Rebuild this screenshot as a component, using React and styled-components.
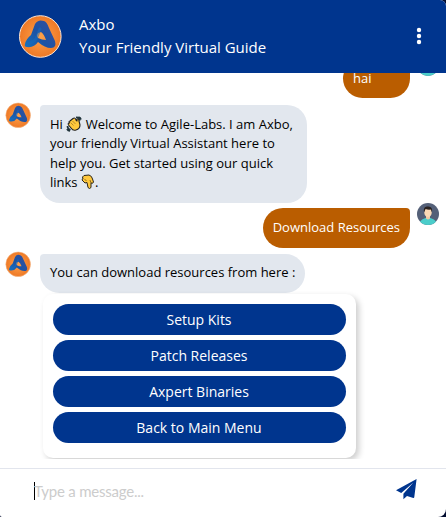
import React from "react";
import styled, { createGlobalStyle } from "styled-components";

const GlobalStyle = createGlobalStyle`
  * { box-sizing: border-box; }
  body { margin: 0; background: #020c30; overflow: hidden; }
`;

const Widget = styled.main`
  display: flex;
  flex-direction: column;
  width: 446px;
  height: 517px;
  overflow: hidden;
  background: #fff;
  border-radius: 0 6px 8px 2px;
  font-family: "Open Sans", sans-serif;
`;

const Header = styled.header`
  display: flex;
  flex: none;
  align-items: center;
  height: 73px;
  padding: 0 21px 1px 18px;
  background: #00358e;
  color: #fff;
`;

const Titles = styled.div`
  flex: 1;
  margin-left: 17px;
  padding-bottom: 1px;
  font-size: 15px;
  line-height: 23px;
`;

const MenuButton = styled.button`
  display: block;
  width: 12px;
  height: 18px;
  padding: 0;
  border: 0;
  background: none;
  color: #fff;
  svg { display: block; }
`;

const Messages = styled.section`
  display: flex;
  flex: none;
  flex-direction: column;
  justify-content: flex-end;
  height: 386px;
  overflow: hidden;
`;

const Row = styled.div`
  display: flex;
  flex: none;
  align-items: flex-start;
  justify-content: ${(p) => (p.$user ? "flex-end" : "flex-start")};
  gap: ${(p) => (p.$user ? "7px" : "9px")};
  padding: ${(p) => (p.$user ? "0 7px 0 0" : "0 0 0 5px")};
  margin-bottom: ${(p) => p.$after}px;
`;

const Bubble = styled.p`
  min-width: 67px;
  max-width: 267px;
  margin: ${(p) => (p.$user ? "5px" : "3px")} 0 0;
  padding: ${(p) => (p.$user ? "10px" : "9.6px 10px 10.4px")};
  border-radius: ${(p) => (p.$user ? "20px 4px 20px 20px" : "4px 20px 20px 20px")};
  background: ${(p) => (p.$user ? "#ba5d00" : "#e2e7ee")};
  color: ${(p) => (p.$user ? "#fff" : "#000")};
  font-size: 13px;
  line-height: 19.5px;
`;

const Options = styled.nav`
  display: flex;
  flex: none;
  flex-direction: column;
  gap: 5px;
  width: 313px;
  height: 164px;
  margin: 0 0 1px 43px;
  padding: 10px;
  border-radius: 10px;
  box-shadow: 3px 3px 6px rgba(0, 0, 0, 0.2);
`;

const Option = styled.button`
  height: 31px;
  padding: 0 1px 0 0;
  border: 0;
  border-radius: 16px;
  background: #00358e;
  color: #fff;
  font: 14px/31px "Open Sans", sans-serif;
`;

const Composer = styled.footer`
  display: flex;
  flex: 1;
  align-items: flex-start;
  justify-content: space-between;
  margin-top: 9px;
  padding: 10px 29px 0 34px;
  border-top: 1px solid #e2e5ed;
`;

const Placeholder = styled.div`
  display: flex;
  align-items: center;
  height: 24px;
  color: #ccc;
  font: 15px/20px Lato, sans-serif;
  letter-spacing: -0.22px;
`;

const Caret = styled.i`
  width: 1px;
  height: 18px;
  margin-right: -1px;
  background: #000;
`;

const Emoji = styled.svg`
  width: ${(p) => p.$width}px;
  height: 16px;
  vertical-align: -3px;
`;

function BotAvatar({ size, ring }) {
  return (
    <svg width={size} height={size} viewBox="0 0 44 44" aria-label="Axbo">
      <defs>
        <radialGradient id="botOrange"><stop offset="0" stopColor="#ffa24b" /><stop offset="1" stopColor="#ee7926" /></radialGradient>
        <linearGradient id="botBlue" x1="0" y1="1" x2="1" y2="0.3"><stop stopColor="#1574c0" /><stop offset="0.5" stopColor="#1b53a5" /><stop offset="1" stopColor="#3150a0" /></linearGradient>
      </defs>
      <circle cx="22.3" cy="22.5" r="20.8" fill="url(#botOrange)" stroke={ring ? "#fde5d3" : "#f5b27d"} strokeWidth="1" />
      <path fill="url(#botBlue)" fillRule="evenodd" d="M7 30Q8 25 13 21L17 10Q20 5 26 7Q29 8 31 14L37 27Q39 34 33 34Q27 34 20 28Q16 34 9 33Q6 33 7 30ZM20 19Q18 22 20 24Q24 26 28 26Q26 20 23 18Z" />
      <path d="M10 29Q15 29 18 25L22 15" fill="none" stroke="#156cc0" strokeWidth="3" strokeLinecap="round" opacity=".55" />
    </svg>
  );
}

function UserAvatar() {
  return (
    <svg width="22" height="22" viewBox="0 0 44 44" aria-label="User">
      <defs><clipPath id="userClip"><circle cx="22" cy="22" r="22" /></clipPath></defs>
      <g clipPath="url(#userClip)">
        <path fill="#546078" d="M0 0h44v44H0z" />
        <path fill="#4bcdca" d="M6 44V37Q9 32 17 30h10Q35 32 38 37v7z" />
        <path fill="#f1c9a5" d="M18 24h8v7q-4 4-8 0z" />
        <ellipse cx="22" cy="19" rx="7.5" ry="9" fill="#fbd9b5" />
        <path fill="#29211f" d="M14 19Q12 7 20 7q12-2 10 12l-2-6q-6 1-11-1z" />
      </g>
    </svg>
  );
}

function Wave() {
  return (
    <Emoji $width={16} viewBox="0 0 16 16" aria-label="Waving hand">
      <path d="M4 5 7 2.5Q9 1 10 4l1 1V3q2-1 2 2l1 4q0 4-4 5-3 1-5-2L2.5 9q-1-2 1-2L3 6q0-1 1-1z" fill="#ffc83d" stroke="#222" strokeWidth="1.1" strokeLinejoin="round" />
      <path d="m4.5 6.5 3 3M6.5 5l3 3" stroke="#8c641c" strokeWidth=".6" />
      <path d="M10 1.5q3-.5 4 3M12.5 1q2 .5 2.5 2.5M1.5 10q0 3 3 4M1 13q1 2 3 2" fill="none" stroke="#20343b" strokeWidth="1.7" />
    </Emoji>
  );
}

function PointDown() {
  return (
    <Emoji $width={14} viewBox="0 0 14 16" aria-label="Pointing down">
      <path d="M3 1.5 8 1q3 1 3.5 4l1 3q-.5 2-2.5 1v4.5q-1.5 2-3 0L6 8.5 4 9 1 6q0-1 1-1l-.5-2z" fill="#ffc83d" stroke="#292418" strokeWidth="1" strokeLinejoin="round" />
      <path d="M3.5 5 5.5 7M9 6l1 3" stroke="#604616" strokeWidth=".7" />
    </Emoji>
  );
}

function SendIcon() {
  return (
    <svg width="21" height="21" viewBox="0 0 21 21" aria-label="Send">
      <path fill="#00358e" d="M20.6 0 0 11.2 5.2 14 17.4 3.6 7.4 14.7V20.3L11 17l6.3 1.9Q18.2 19 18.3 18z" />
    </svg>
  );
}

const options = ["Setup Kits", "Patch Releases", "Axpert Binaries", "Back to Main Menu"];

export default function App() {
  return (
    <>
      <GlobalStyle />
      <Widget>
        <Header>
          <BotAvatar size={44} ring />
          <Titles><div>Axbo</div><div>Your Friendly Virtual Guide</div></Titles>
          <MenuButton aria-label="Menu">
            <svg width="12" height="18" fill="currentColor">
              <circle cx="6" cy="3" r="2.2" /><circle cx="6" cy="9" r="2.2" /><circle cx="6" cy="15" r="2.2" />
            </svg>
          </MenuButton>
        </Header>
        <Messages>
          <Row $user $after={4}><Bubble $user>hai</Bubble><UserAvatar /></Row>
          <Row $after={0}>
            <BotAvatar size={26} />
            <Bubble>Hi <Wave /> Welcome to Agile-Labs. I am Axbo, your friendly Virtual Assistant here to help you. Get started using our quick links <PointDown />.</Bubble>
          </Row>
          <Row $user $after={3}><Bubble $user>Download Resources</Bubble><UserAvatar /></Row>
          <Row $after={1}><BotAvatar size={26} /><Bubble>You can download resources from here :</Bubble></Row>
          <Options>{options.map((label) => <Option key={label}>{label}</Option>)}</Options>
        </Messages>
        <Composer>
          <Placeholder><Caret />Type a message...</Placeholder>
          <SendIcon />
        </Composer>
      </Widget>
    </>
  );
}
